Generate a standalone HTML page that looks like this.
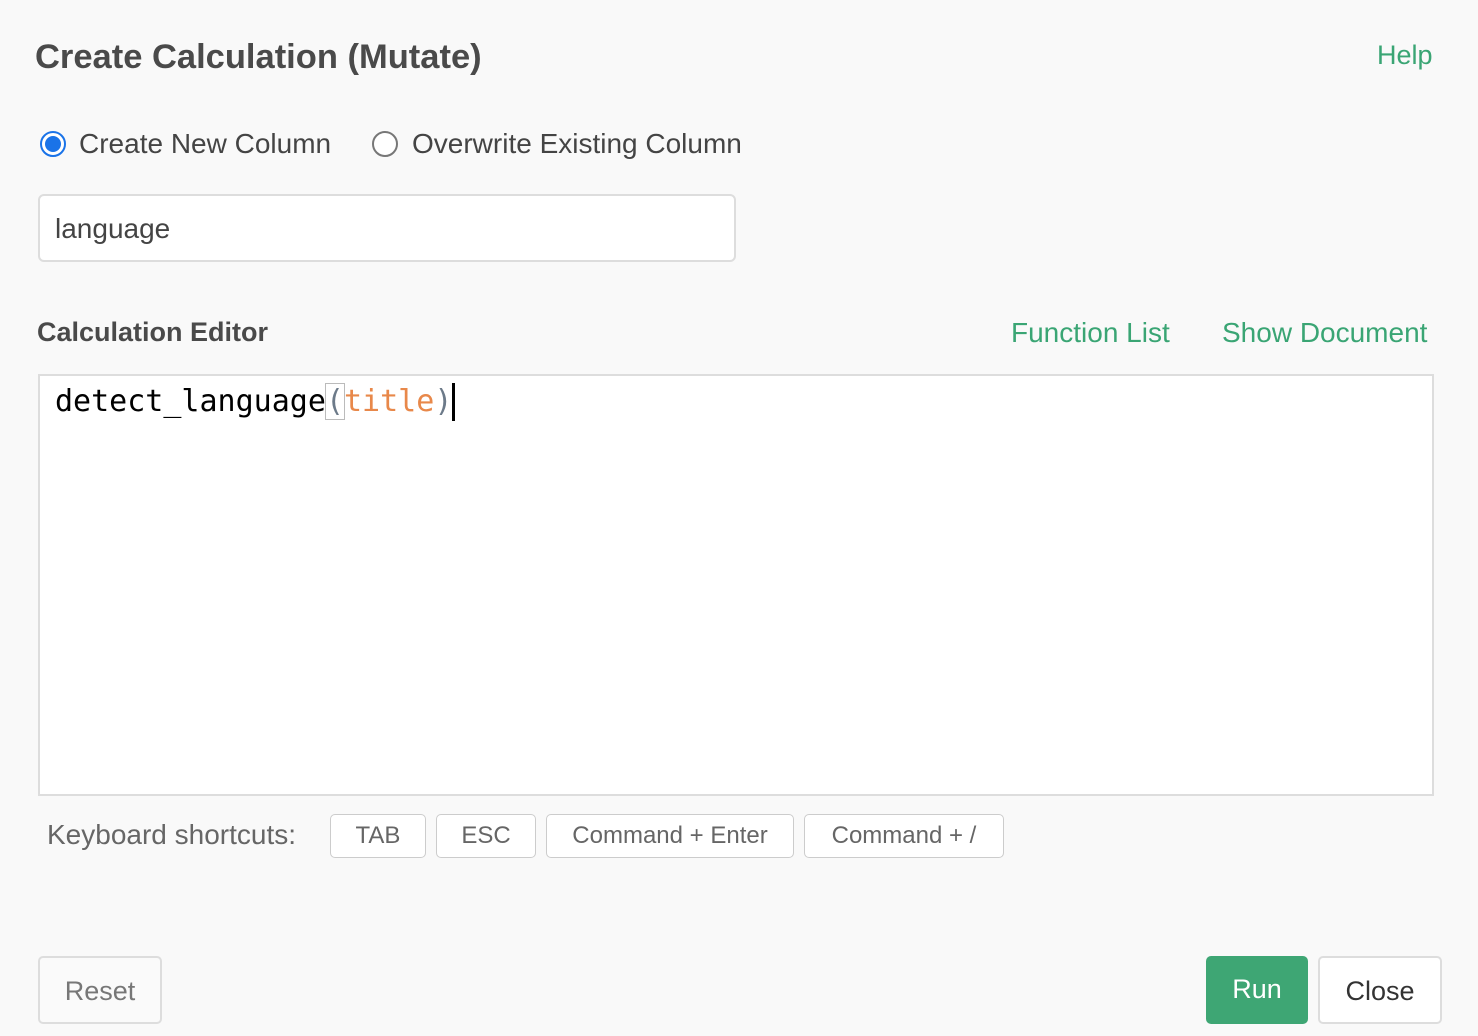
<!DOCTYPE html>
<html><head><style>
body{margin:0;width:1478px;height:1036px;background:#f9f9f9;font-family:"Liberation Sans",Arial,sans-serif;position:relative;overflow:hidden;color:#444}
.a{position:absolute;white-space:nowrap}
.g{color:#3aa574}
.key{position:absolute;top:814px;height:44px;border:1px solid #ccc;border-radius:5px;background:#fff;box-sizing:border-box;font-size:24px;color:#666;text-align:center;line-height:42px}
.btn{position:absolute;top:956px;height:68px;border-radius:5px;box-sizing:border-box;font-size:27px;text-align:center;line-height:66px}
</style></head><body>
<div class="a" style="left:35px;top:38px;font-size:34.5px;font-weight:bold;color:#4a4a4a">Create Calculation (Mutate)</div>
<div class="a g" style="left:1377px;top:40px;font-size:27px">Help</div>
<div class="a" style="left:40px;top:131px;width:26px;height:26px;border:2px solid #1a73e8;border-radius:50%;box-sizing:border-box;background:#fff"><div style="position:absolute;left:3px;top:3px;width:16px;height:16px;border-radius:50%;background:#1a73e8"></div></div>
<div class="a" style="left:79px;top:128px;font-size:28px">Create New Column</div>
<div class="a" style="left:372px;top:131px;width:26px;height:26px;border:2px solid #777;border-radius:50%;box-sizing:border-box;background:#fff"></div>
<div class="a" style="left:412px;top:128px;font-size:28px">Overwrite Existing Column</div>
<div class="a" style="left:38px;top:194px;width:698px;height:68px;border:2px solid #ddd;border-radius:6px;background:#fff;box-sizing:border-box"></div>
<div class="a" style="left:55px;top:213px;font-size:28px">language</div>
<div class="a" style="left:37px;top:317px;font-size:27px;font-weight:bold;color:#4a4a4a">Calculation Editor</div>
<div class="a g" style="left:1011px;top:317px;font-size:28px">Function List</div>
<div class="a g" style="left:1222px;top:317px;font-size:28px">Show Document</div>
<div class="a" style="left:38px;top:374px;width:1396px;height:422px;border:2px solid #ddd;background:#fff;box-sizing:border-box"></div>
<div class="a" style="left:55px;top:383px;font-family:'DejaVu Sans Mono','Liberation Mono',monospace;font-size:30px;line-height:38px;color:#000">detect_language<span style="color:#6c7a89;outline:1px solid #bbb">(</span><span style="color:#e8884a">title</span><span style="color:#6c7a89">)</span><span style="display:inline-block;width:3px;height:38px;background:#000;vertical-align:top"></span></div>
<div class="a" style="left:47px;top:819px;font-size:28px;color:#666">Keyboard shortcuts:</div>
<div class="key" style="left:330px;width:96px">TAB</div>
<div class="key" style="left:436px;width:100px">ESC</div>
<div class="key" style="left:546px;width:248px">Command + Enter</div>
<div class="key" style="left:804px;width:200px">Command + /</div>
<div class="btn" style="left:38px;width:124px;border:2px solid #ddd;background:#fafafa;color:#777">Reset</div>
<div class="btn" style="left:1206px;width:102px;background:#3ea674;color:#fff">Run</div>
<div class="btn" style="left:1318px;width:124px;border:2px solid #ddd;background:#fff;color:#333">Close</div>
</body></html>
